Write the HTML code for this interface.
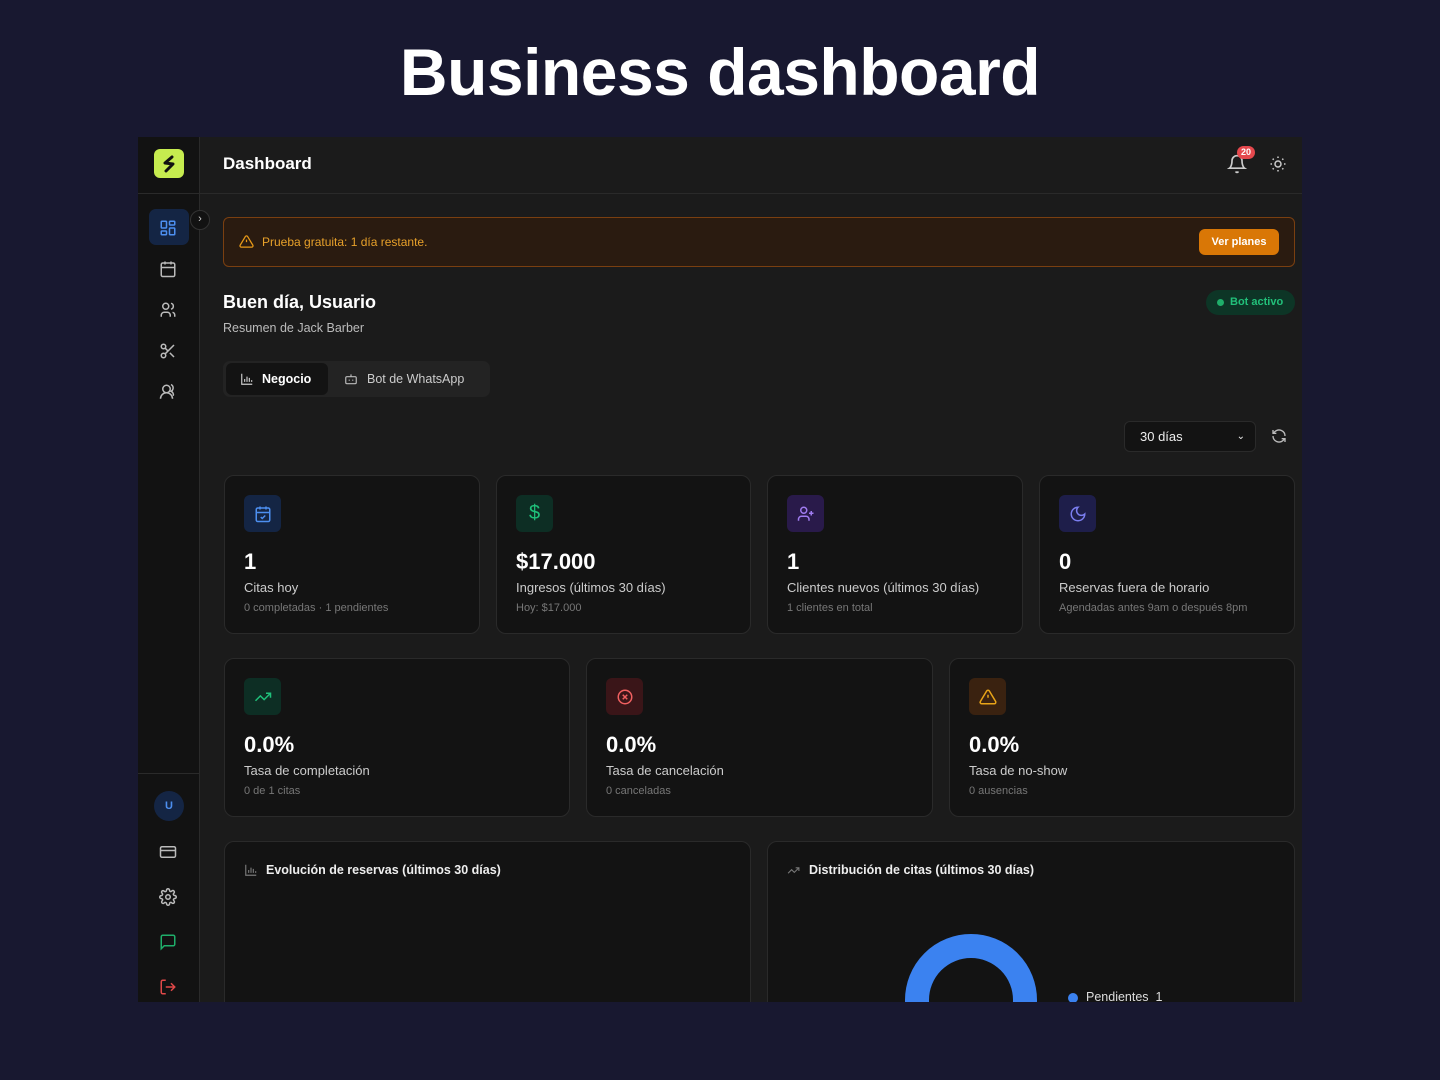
<!DOCTYPE html>
<html><head><meta charset="utf-8"><style>
*{box-sizing:border-box;margin:0;padding:0}
body{width:1440px;height:1080px;background:#181830;font-family:"Liberation Sans",sans-serif;position:relative;overflow:hidden;color:#eee}
.a{position:absolute}
h1{position:absolute;top:34px;left:0;width:1440px;text-align:center;font-size:66px;font-weight:bold;color:#fff;letter-spacing:-0.5px}
.screen{position:absolute;left:138px;top:137px;width:1164px;height:865px;background:#1b1b1b;overflow:hidden}
.side{position:absolute;left:0;top:0;width:62px;height:865px;background:#121212;border-right:1px solid #2a2a2a}
.card{position:absolute;background:#131313;border:1px solid #2a2a2a;border-radius:10px}
.ib{position:absolute;left:19px;top:19px;width:37px;height:37px;border-radius:6px;display:flex;align-items:center;justify-content:center}
.num{position:absolute;left:19px;top:73px;font-size:22px;font-weight:bold;color:#fff}
.lab{position:absolute;left:19px;top:104px;font-size:13px;color:#ccc}
.sub{position:absolute;left:19px;top:126px;font-size:11px;color:#777}
svg{display:block}
.si{position:absolute;left:21px}
</style></head><body>
<h1>Business dashboard</h1>
<div class="screen">
<div class="side">
 <div class="a" style="left:16px;top:12px;width:30px;height:29px;background:#c6ec4f;border-radius:6px;display:flex;align-items:center;justify-content:center"><svg width="16" height="18" viewBox="0 0 16 18"><path d="M11 2 L4 8 L12 9 L5 16" stroke="#121212" stroke-width="3" fill="none" stroke-linecap="round" stroke-linejoin="round"/></svg></div>
 <div class="a" style="left:0;top:56px;width:62px;border-top:1px solid #2a2a2a"></div>
 <div class="a" style="left:11px;top:72px;width:40px;height:36px;background:#142544;border-radius:7px"></div>
 <svg class="si" style="top:82px" width="18" height="18" viewBox="0 0 24 24" fill="none" stroke="#4d8ff0" stroke-width="2"><rect x="3" y="3" width="7" height="9" rx="1"/><rect x="14" y="3" width="7" height="5" rx="1"/><rect x="14" y="12" width="7" height="9" rx="1"/><rect x="3" y="16" width="7" height="5" rx="1"/></svg>
 <div class="a" style="left:52px;top:73px;width:20px;height:20px;border-radius:50%;background:#121212;border:1px solid #333;color:#ccc;font-size:11px;text-align:center;line-height:17px">›</div>
 <svg class="si" style="top:123px" width="18" height="18" viewBox="0 0 24 24" fill="none" stroke="#bbb" stroke-width="2"><rect x="3" y="4" width="18" height="18" rx="2"/><path d="M16 2v4M8 2v4M3 10h18"/></svg>
 <svg class="si" style="top:164px" width="18" height="18" viewBox="0 0 24 24" fill="none" stroke="#bbb" stroke-width="2"><circle cx="9" cy="7" r="4"/><path d="M3 21v-2a4 4 0 0 1 4-4h4a4 4 0 0 1 4 4v2M16 3.1a4 4 0 0 1 0 7.8M21 21v-2a4 4 0 0 0-3-3.9"/></svg>
 <svg class="si" style="top:205px" width="18" height="18" viewBox="0 0 24 24" fill="none" stroke="#bbb" stroke-width="2"><circle cx="6" cy="6" r="3"/><circle cx="6" cy="18" r="3"/><path d="M20 4L8.1 15.9M14.5 14.5L20 20M8.1 8.1L12 12"/></svg>
 <svg class="si" style="top:246px" width="18" height="18" viewBox="0 0 24 24" fill="none" stroke="#bbb" stroke-width="2"><circle cx="10" cy="8" r="5"/><path d="M2 21a8 8 0 0 1 16 0M19 17a5 5 0 0 0-3-6 5 5 0 0 0 0-9"/></svg>
 <div class="a" style="left:0;top:636px;width:62px;border-top:1px solid #2a2a2a"></div>
 <div class="a" style="left:16px;top:654px;width:30px;height:30px;border-radius:50%;background:#142544;color:#4d8ff0;font-size:11px;font-weight:bold;text-align:center;line-height:30px">U</div>
 <svg class="si" style="top:706px" width="18" height="18" viewBox="0 0 24 24" fill="none" stroke="#bbb" stroke-width="2"><rect x="2" y="5" width="20" height="14" rx="2"/><path d="M2 10h20"/></svg>
 <svg class="si" style="top:751px" width="18" height="18" viewBox="0 0 24 24" fill="none" stroke="#bbb" stroke-width="2"><circle cx="12" cy="12" r="3"/><path d="M19.4 15a1.7 1.7 0 0 0 .3 1.8l.1.1a2 2 0 1 1-2.8 2.8l-.1-.1a1.7 1.7 0 0 0-1.8-.3 1.7 1.7 0 0 0-1 1.5V21a2 2 0 1 1-4 0v-.1a1.7 1.7 0 0 0-1.1-1.5 1.7 1.7 0 0 0-1.8.3l-.1.1a2 2 0 1 1-2.8-2.8l.1-.1a1.7 1.7 0 0 0 .3-1.8 1.7 1.7 0 0 0-1.5-1H3a2 2 0 1 1 0-4h.1a1.7 1.7 0 0 0 1.5-1.1 1.7 1.7 0 0 0-.3-1.8l-.1-.1a2 2 0 1 1 2.8-2.8l.1.1a1.7 1.7 0 0 0 1.8.3H9a1.7 1.7 0 0 0 1-1.5V3a2 2 0 1 1 4 0v.1a1.7 1.7 0 0 0 1 1.5 1.7 1.7 0 0 0 1.8-.3l.1-.1a2 2 0 1 1 2.8 2.8l-.1.1a1.7 1.7 0 0 0-.3 1.8V9a1.7 1.7 0 0 0 1.5 1H21a2 2 0 1 1 0 4h-.1a1.7 1.7 0 0 0-1.5 1z"/></svg>
 <svg class="si" style="top:796px" width="18" height="18" viewBox="0 0 24 24" fill="none" stroke="#1fae6a" stroke-width="2"><path d="M21 15a2 2 0 0 1-2 2H7l-4 4V5a2 2 0 0 1 2-2h14a2 2 0 0 1 2 2z"/></svg>
 <svg class="si" style="top:841px" width="18" height="18" viewBox="0 0 24 24" fill="none" stroke="#e04848" stroke-width="2"><path d="M9 21H5a2 2 0 0 1-2-2V5a2 2 0 0 1 2-2h4M16 17l5-5-5-5M21 12H9"/></svg>
</div>
<div class="a" style="left:62px;top:56px;width:1102px;border-top:1px solid #2a2a2a"></div>
<div class="a" style="left:85px;top:17px;font-size:17px;font-weight:bold;color:#fff">Dashboard</div>
<svg class="a" style="left:1089px;top:17px" width="20" height="20" viewBox="0 0 24 24" fill="none" stroke="#ccc" stroke-width="2"><path d="M6 8a6 6 0 0 1 12 0c0 7 3 9 3 9H3s3-2 3-9M10.3 21a1.9 1.9 0 0 0 3.4 0"/></svg>
<div class="a" style="left:1099px;top:9px;width:18px;height:13px;border-radius:7px;background:#e5484d;color:#fff;font-size:9px;font-weight:bold;text-align:center;line-height:13px">20</div>
<svg class="a" style="left:1131px;top:18px" width="18" height="18" viewBox="0 0 24 24" fill="none" stroke="#ccc" stroke-width="2"><circle cx="12" cy="12" r="4"/><path d="M12 2v2M12 20v2M4.9 4.9l1.4 1.4M17.7 17.7l1.4 1.4M2 12h2M20 12h2M6.3 17.7l-1.4 1.4M19.1 4.9l-1.4 1.4"/></svg>
<div class="a" style="left:85px;top:80px;width:1072px;height:50px;background:#2a1b10;border:1px solid #7a3f10;border-radius:6px"></div>
<svg class="a" style="left:101px;top:97px" width="15" height="15" viewBox="0 0 24 24" fill="none" stroke="#e89a18" stroke-width="2"><path d="M10.3 3.9L1.8 18a2 2 0 0 0 1.7 3h17a2 2 0 0 0 1.7-3L13.7 3.9a2 2 0 0 0-3.4 0zM12 9v4M12 17h.01"/></svg>
<div class="a" style="left:124px;top:98px;font-size:12px;color:#e8a12a">Prueba gratuita: 1 día restante.</div>
<div class="a" style="left:1061px;top:92px;width:80px;height:26px;background:#d97706;border-radius:6px;color:#fff;font-size:11px;font-weight:bold;text-align:center;line-height:26px">Ver planes</div>
<div class="a" style="left:85px;top:155px;font-size:18px;font-weight:bold;color:#fff">Buen día, Usuario</div>
<div class="a" style="left:85px;top:184px;font-size:12.5px;color:#bbb">Resumen de Jack Barber</div>
<div class="a" style="left:1068px;top:153px;width:89px;height:25px;background:#0d3526;border-radius:13px;color:#22c07a;font-size:11px;font-weight:bold;line-height:25px;padding-left:24px">Bot activo</div>
<div class="a" style="left:1079px;top:162px;width:7px;height:7px;border-radius:50%;background:#1fae6a"></div>
<div class="a" style="left:85px;top:224px;width:267px;height:36px;background:#232323;border-radius:7px"></div>
<div class="a" style="left:88px;top:226px;width:102px;height:32px;background:#131313;border-radius:6px"></div>
<svg class="a" style="left:102px;top:235px" width="14" height="14" viewBox="0 0 24 24" fill="none" stroke="#ccc" stroke-width="2"><path d="M3 3v18h18M8 17v-5M12 17V8M16 17v-7M20 17v-3"/></svg>
<div class="a" style="left:124px;top:235px;font-size:12.5px;font-weight:bold;color:#fff">Negocio</div>
<svg class="a" style="left:206px;top:235px" width="14" height="14" viewBox="0 0 24 24" fill="none" stroke="#bbb" stroke-width="2"><rect x="3" y="8" width="18" height="12" rx="2"/><path d="M12 8V4M9 13v2M15 13v2"/></svg>
<div class="a" style="left:229px;top:235px;font-size:12.5px;color:#ccc">Bot de WhatsApp</div>
<div class="a" style="left:986px;top:284px;width:132px;height:31px;background:#131313;border:1px solid #2a2a2a;border-radius:6px;color:#eee;font-size:13px;line-height:29px;padding-left:15px">30 días<span style="position:absolute;right:10px;font-size:10px">&#8964;</span></div>
<svg class="a" style="left:1133px;top:291px" width="16" height="16" viewBox="0 0 24 24" fill="none" stroke="#bbb" stroke-width="2"><path d="M21 12a9 9 0 0 0-15-6.7L3 8M3 3v5h5M3 12a9 9 0 0 0 15 6.7l3-2.7M21 21v-5h-5"/></svg>

<div class="card" style="left:86px;top:338px;width:256px;height:159px"><div class="ib" style="background:#142544"><svg width="18" height="18" viewBox="0 0 24 24" fill="none" stroke="#4d8ff0" stroke-width="2"><rect x="3" y="4" width="18" height="18" rx="2"/><path d="M16 2v4M8 2v4M3 10h18M9 16l2 2 4-4"/></svg></div><div class="num">1</div><div class="lab">Citas hoy</div><div class="sub">0 completadas · 1 pendientes</div></div>
<div class="card" style="left:358px;top:338px;width:255px;height:159px"><div class="ib" style="background:#0d2e24"><span style="color:#1fc07a;font-size:20px">$</span></div><div class="num">$17.000</div><div class="lab">Ingresos (últimos 30 días)</div><div class="sub">Hoy: $17.000</div></div>
<div class="card" style="left:629px;top:338px;width:256px;height:159px"><div class="ib" style="background:#291a4a"><svg width="18" height="18" viewBox="0 0 24 24" fill="none" stroke="#a07cf0" stroke-width="2"><circle cx="9" cy="7" r="4"/><path d="M2 21v-2a4 4 0 0 1 4-4h6a4 4 0 0 1 4 4v2M19 8v6M22 11h-6"/></svg></div><div class="num">1</div><div class="lab">Clientes nuevos (últimos 30 días)</div><div class="sub">1 clientes en total</div></div>
<div class="card" style="left:901px;top:338px;width:256px;height:159px"><div class="ib" style="background:#1e1e4a"><svg width="18" height="18" viewBox="0 0 24 24" fill="none" stroke="#7b7ef0" stroke-width="2"><path d="M12 3a6 6 0 0 0 9 9 9 9 0 1 1-9-9z"/></svg></div><div class="num">0</div><div class="lab">Reservas fuera de horario</div><div class="sub">Agendadas antes 9am o después 8pm</div></div>

<div class="card" style="left:86px;top:521px;width:346px;height:159px"><div class="ib" style="background:#0d2e24"><svg width="18" height="18" viewBox="0 0 24 24" fill="none" stroke="#1fc07a" stroke-width="2"><path d="M22 7l-8.5 8.5-5-5L2 17M16 7h6v6"/></svg></div><div class="num">0.0%</div><div class="lab">Tasa de completación</div><div class="sub">0 de 1 citas</div></div>
<div class="card" style="left:448px;top:521px;width:347px;height:159px"><div class="ib" style="background:#3a1518"><svg width="18" height="18" viewBox="0 0 24 24" fill="none" stroke="#f06060" stroke-width="2"><circle cx="12" cy="12" r="9"/><path d="M15 9l-6 6M9 9l6 6"/></svg></div><div class="num">0.0%</div><div class="lab">Tasa de cancelación</div><div class="sub">0 canceladas</div></div>
<div class="card" style="left:811px;top:521px;width:346px;height:159px"><div class="ib" style="background:#3a2210"><svg width="18" height="18" viewBox="0 0 24 24" fill="none" stroke="#e8a418" stroke-width="2"><path d="M10.3 3.9L1.8 18a2 2 0 0 0 1.7 3h17a2 2 0 0 0 1.7-3L13.7 3.9a2 2 0 0 0-3.4 0zM12 9v4M12 17h.01"/></svg></div><div class="num">0.0%</div><div class="lab">Tasa de no-show</div><div class="sub">0 ausencias</div></div>

<div class="card" style="left:86px;top:704px;width:527px;height:200px"><svg class="a" style="left:19px;top:21px" width="14" height="14" viewBox="0 0 24 24" fill="none" stroke="#777" stroke-width="2"><path d="M3 3v18h18M8 17v-5M12 17V8M16 17v-7M20 17v-3"/></svg><div class="a" style="left:41px;top:21px;font-size:12.5px;font-weight:bold;color:#eee">Evolución de reservas (últimos 30 días)</div></div>
<div class="card" style="left:629px;top:704px;width:528px;height:200px"><svg class="a" style="left:18px;top:22px" width="15" height="13" viewBox="0 0 24 24" fill="none" stroke="#777" stroke-width="2"><path d="M22 7l-8.5 8.5-5-5L2 17M16 7h6v6"/></svg><div class="a" style="left:41px;top:21px;font-size:12.5px;font-weight:bold;color:#eee">Distribución de citas (últimos 30 días)</div>
<svg class="a" style="left:135px;top:90px" width="136" height="136" viewBox="0 0 136 136"><circle cx="68" cy="68" r="54" fill="none" stroke="#3b82f0" stroke-width="24"/></svg>
<div class="a" style="left:300px;top:151px;width:10px;height:10px;border-radius:50%;background:#3b82f0"></div><div class="a" style="left:318px;top:148px;font-size:12.5px;color:#ddd">Pendientes&nbsp; 1</div></div>
</div>
</body></html>
